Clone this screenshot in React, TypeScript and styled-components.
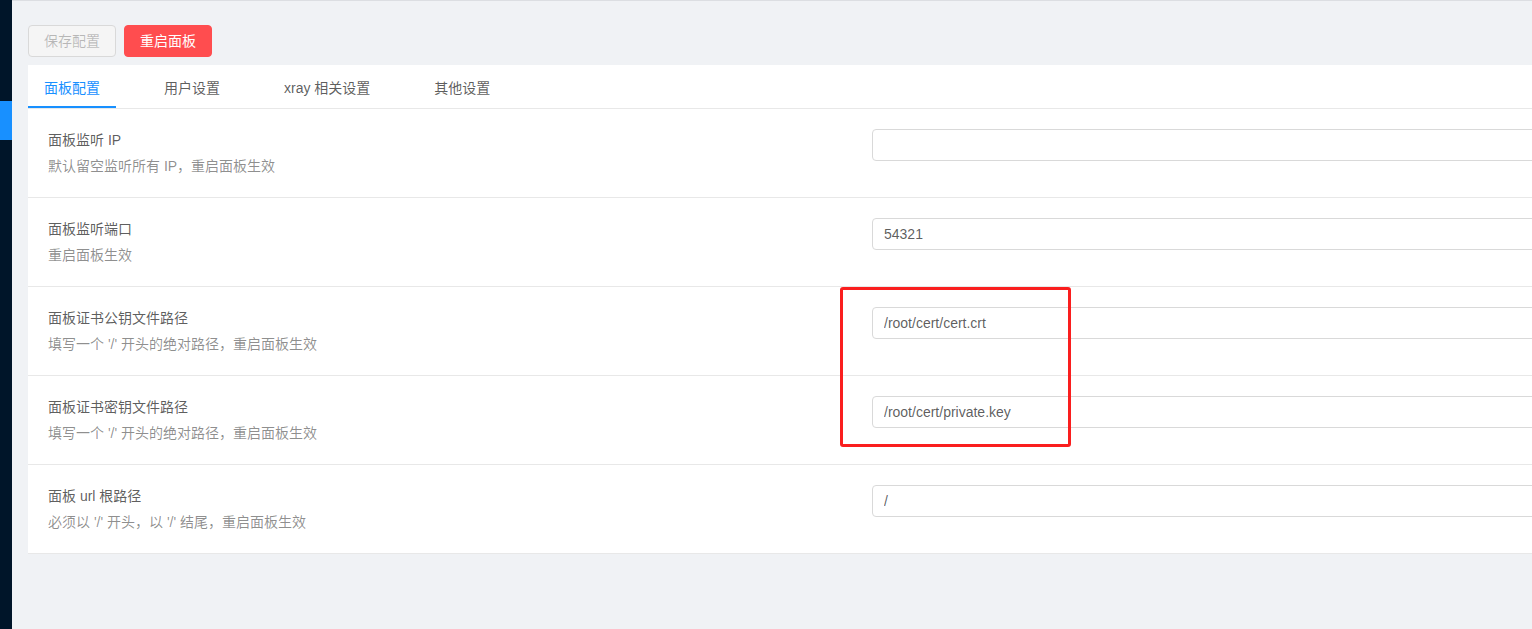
import React from 'react'
import styled, { createGlobalStyle } from 'styled-components'

const GlobalStyle = createGlobalStyle`
  html, body {
    margin: 0;
    padding: 0;
    overflow: hidden;
    background: #f0f2f5;
    font-family: "Liberation Sans", "Noto Sans CJK SC", sans-serif;
    font-size: 14px;
  }
`

const Layout = styled.div`
  display: flex;
  width: 100%;
  min-height: 629px;
`

const Sider = styled.div`
  width: 12px;
  flex-shrink: 0;
  background: #001529;
  padding-top: 101px;
`

const SiderActive = styled.div`
  height: 39px;
  background: #1890ff;
`

const Main = styled.div`
  flex: 1;
  border-top: 1px solid #dcdee2;
  padding: 24px 0 0 16px;
  overflow: hidden;
`

const Toolbar = styled.div`
  display: flex;
  gap: 8px;
  margin-bottom: 8px;
`

const Button = styled.button<{ $danger?: boolean }>`
  height: 32px;
  padding: 0 15px;
  border-radius: 4px;
  font-family: inherit;
  font-size: 14px;
  line-height: 30px;
  border: 1px solid ${p => (p.$danger ? '#ff4d4f' : '#d9d9d9')};
  background: ${p => (p.$danger ? '#ff4d4f' : '#f5f5f5')};
  color: ${p => (p.$danger ? '#fff' : 'rgba(0, 0, 0, 0.25)')};
`

const Card = styled.div`
  position: relative;
  width: 1688px;
  background: #fff;
`

const TabBar = styled.div`
  display: flex;
  gap: 32px;
  border-bottom: 1px solid #e8e8e8;
`

const Tab = styled.div<{ $active?: boolean }>`
  padding: 13px 16px 7px;
  line-height: 21px;
  color: ${p => (p.$active ? '#1890ff' : 'rgba(0, 0, 0, 0.65)')};
  border-bottom: 2px solid ${p => (p.$active ? '#1890ff' : 'transparent')};
`

const Row = styled.div`
  display: grid;
  grid-template-columns: 1fr 1fr;
  align-items: start;
  padding: 20px;
  border-bottom: 1px solid #e8e8e8;

  &:last-child {
    border-bottom: none;
  }
`

const Title = styled.div`
  line-height: 22px;
  color: rgba(0, 0, 0, 0.65);
  margin-bottom: 4px;
`

const Desc = styled.div`
  line-height: 22px;
  color: rgba(0, 0, 0, 0.45);
`

const Input = styled.input`
  box-sizing: border-box;
  width: 100%;
  height: 32px;
  padding: 4px 11px;
  border: 1px solid #d9d9d9;
  border-radius: 4px;
  font-family: inherit;
  font-size: 14px;
  color: rgba(0, 0, 0, 0.65);
  background: #fff;
  outline: none;
`

const Highlight = styled.div`
  position: absolute;
  left: 812px;
  top: 222px;
  width: 231px;
  height: 160px;
  box-sizing: border-box;
  border: 3px solid #fa1e1e;
  border-radius: 3px;
  pointer-events: none;
`

const settings = [
  { title: '面板监听 IP', desc: '默认留空监听所有 IP，重启面板生效', value: '' },
  { title: '面板监听端口', desc: '重启面板生效', value: '54321' },
  { title: '面板证书公钥文件路径', desc: "填写一个 '/' 开头的绝对路径，重启面板生效", value: '/root/cert/cert.crt' },
  { title: '面板证书密钥文件路径', desc: "填写一个 '/' 开头的绝对路径，重启面板生效", value: '/root/cert/private.key' },
  { title: '面板 url 根路径', desc: "必须以 '/' 开头，以 '/' 结尾，重启面板生效", value: '/' },
]

const tabs = ['面板配置', '用户设置', 'xray 相关设置', '其他设置']

const App: React.FC = () => {
  return (
    <>
      <GlobalStyle />
      <Layout>
        <Sider>
          <SiderActive />
        </Sider>
        <Main>
          <Toolbar>
            <Button disabled>保存配置</Button>
            <Button $danger>重启面板</Button>
          </Toolbar>
          <Card>
            <TabBar>
              {tabs.map((t, i) => (
                <Tab key={t} $active={i === 0}>{t}</Tab>
              ))}
            </TabBar>
            {settings.map(s => (
              <Row key={s.title}>
                <div>
                  <Title>{s.title}</Title>
                  <Desc>{s.desc}</Desc>
                </div>
                <Input defaultValue={s.value} />
              </Row>
            ))}
            <Highlight />
          </Card>
        </Main>
      </Layout>
    </>
  )
}

export default App
